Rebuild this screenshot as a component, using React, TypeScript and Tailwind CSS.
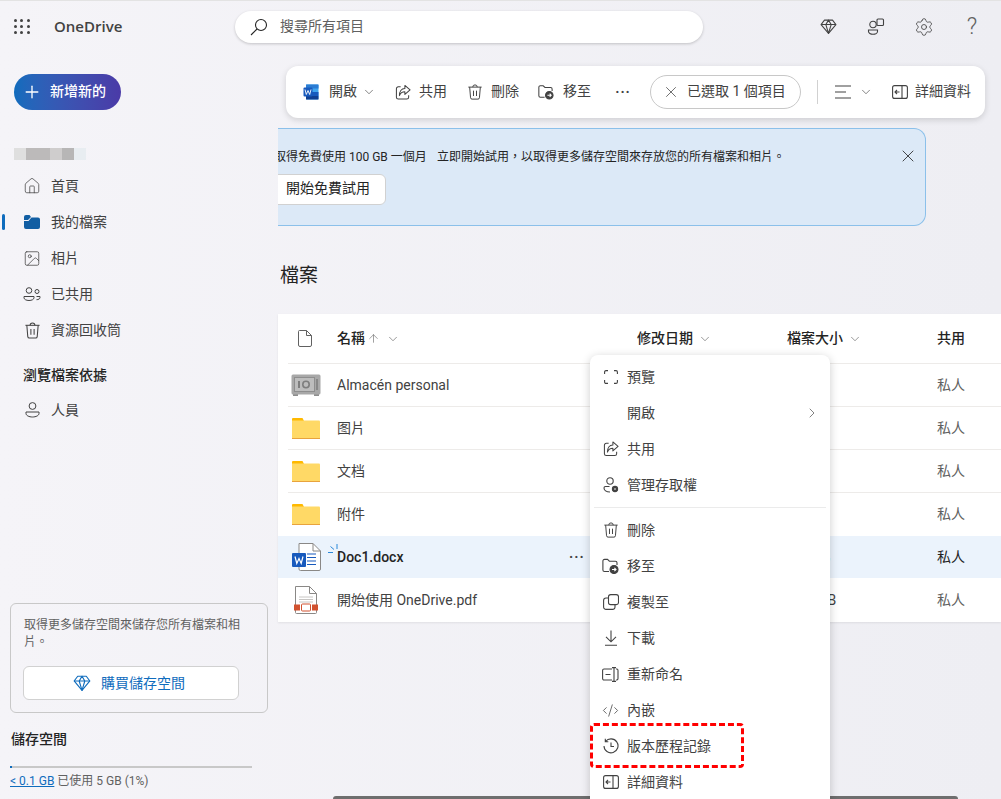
// App.tsx
import React from "react";
import {
  ArrowUp,
  ChevronDown,
  ChevronRight,
  CodeXml,
  Home,
  Image,
  Plus,
  Settings,
  X,
} from "lucide-react";

const Diamond = ({ size = 16, className = "" }: { size?: number; className?: string }) => (
  <svg width={size} height={size} viewBox="0 0 16 16" fill="none" stroke="currentColor" strokeWidth="1" className={className}>
    <path d="M4.200 2h7.600L15 6.200 8 14.500 1 6.200 4.200 2Z" strokeLinejoin="round" />
    <path d="M1 6.200h14M5.500 6.200 8 2l2.500 4.200L8 14.500 5.500 6.200Z" strokeLinejoin="round" />
  </svg>
);

const ShareIcon = ({ size = 17 }: { size?: number }) => (
  <svg width={size} height={size} viewBox="0 0 17 17" fill="none" stroke="currentColor" strokeWidth="1.1" strokeLinejoin="round">
    <path d="M6 2.500H3.500a2 2 0 0 0-2 2v9a2 2 0 0 0 2 2h9a2 2 0 0 0 2-2v-2" />
    <path d="M10.500 1 16 5.800l-5.500 4.800V7.800c-3 0-4.800 1.500-5.800 4 0-4.500 2-7.500 5.800-7.500V1Z" />
  </svg>
);

const TrashIcon = ({ size = 18 }: { size?: number }) => (
  <svg width={size} height={size} viewBox="0 0 18 18" fill="none" stroke="currentColor" strokeWidth="1.1">
    <path d="M1.500 3.500h15" />
    <path d="M6.500 3.500a2.500 2.500 0 0 1 5 0" />
    <path d="M3 3.500l1 12a1.700 1.700 0 0 0 1.700 1.500h6.600a1.700 1.700 0 0 0 1.700-1.500l1-12" />
    <path d="M7.300 7.500v6M10.700 7.500v6" />
  </svg>
);

const DetailsIcon = () => (
  <svg width="16" height="14" viewBox="0 0 16 14" fill="none" stroke="currentColor" strokeWidth="1.1">
    <rect x="0.600" y="0.600" width="14.800" height="12.800" rx="2" />
    <path d="M10 0.600v12.800M7.500 7H3M5 5 3 7l2 2" />
  </svg>
);

const MoveIcon = () => (
  <svg width="17" height="16" viewBox="0 0 17 16" fill="none" stroke="currentColor" strokeWidth="1.1">
    <path d="M7 13.500H2.500a1.600 1.600 0 0 1-1.600-1.600V3a1.600 1.600 0 0 1 1.600-1.600h3L7.400 3.200h6A1.600 1.600 0 0 1 15 4.800V7" />
    <circle cx="12" cy="11.500" r="4" fill="currentColor" />
    <path d="M10 11.500h4M12.400 9.800l1.600 1.700-1.600 1.700" stroke="#fff" />
  </svg>
);

const WordMini = () => (
  <svg width="16" height="16" viewBox="0 0 16 16">
    <rect x="3" y="0.500" width="12.500" height="15" rx="1" fill="#41a5ee" />
    <rect x="3" y="0.500" width="12.500" height="4" fill="#2b7cd3" />
    <rect x="3" y="8" width="12.500" height="4" fill="#185abd" />
    <rect x="3" y="12" width="12.500" height="3.500" fill="#103f91" />
    <rect x="0.500" y="3.500" width="9" height="9" rx="1" fill="#185abd" />
    <path d="M2 5.500 3.300 10.500 5 6.500 6.700 10.500 8 5.500" fill="none" stroke="#fff" strokeWidth="0.900" />
  </svg>
);

const Folder = () => (
  <svg width="28" height="22" viewBox="0 0 28 22">
    <path d="M0 2a1 1 0 0 1 1-1h9.500L12 4H0V2Z" fill="#ffb900" />
    <path d="M0 3.500h27a1 1 0 0 1 1 1V21a1 1 0 0 1-1 1H1a1 1 0 0 1-1-1V3.500Z" fill="#ffd966" />
    <rect x="0" y="21" width="28" height="1" fill="#e8a33d" />
  </svg>
);

const Safe = () => (
  <svg width="30" height="22" viewBox="0 0 30 22">
    <rect x="2" y="19" width="5" height="3" fill="#8e8e8e" />
    <rect x="23" y="19" width="5" height="3" fill="#8e8e8e" />
    <rect x="0.500" y="0.500" width="29" height="20" rx="1.500" fill="#a8a8a8" />
    <rect x="3.500" y="3.500" width="20" height="14" fill="#bdbdbd" stroke="#8e8e8e" />
    <rect x="7" y="7" width="2" height="7" fill="#7e7e7e" />
    <circle cx="15" cy="10.500" r="3.200" fill="none" stroke="#7e7e7e" strokeWidth="1.600" />
    <path d="M26 5v11" stroke="#7e7e7e" strokeWidth="1.500" />
  </svg>
);

const WordFile = () => (
  <svg width="29" height="28" viewBox="0 0 29 28">
    <path d="M7 .5h14l7.500 7.500v18a1.500 1.500 0 0 1-1.500 1.500H8.500A1.500 1.500 0 0 1 7 26V.5Z" fill="#fff" stroke="#8a8886" />
    <path d="M21 .5V8h7.500" fill="none" stroke="#8a8886" />
    <path d="M15 11h9M15 14.500h9M15 18h9M15 21.500h9" stroke="#185abd" strokeWidth="1.200" />
    <rect x="0" y="10" width="14" height="14" rx="1" fill="#185abd" />
    <path d="M3 13.500 4.800 20.500 7 15.500 9.200 20.500 11 13.500" fill="none" stroke="#fff" strokeWidth="1.200" />
  </svg>
);

const PdfFile = () => (
  <svg width="24" height="28" viewBox="0 0 24 28">
    <path d="M1.500 .5h14l7 7v19a1 1 0 0 1-1 1H2.500a1 1 0 0 1-1-1V.5Z" fill="#fff" stroke="#8a8886" />
    <path d="M15.500 .5v7h7" fill="none" stroke="#8a8886" />
    <path d="M5 11h14M5 13.500h14M5 16h14" stroke="#c8c6c4" />
    <rect x="0" y="18.500" width="6" height="6" fill="#d1512f" />
    <rect x="18" y="18.500" width="6" height="6" fill="#d1512f" />
    <rect x="7.500" y="18" width="9" height="7" rx="1" fill="#fff" stroke="#d1512f" />
  </svg>
);

const NavItem: React.FC<{ icon: React.ReactNode; label: string; active?: boolean }> = ({ icon, label, active }) => (
  <div className="relative flex h-9 items-center pl-[23px] text-[14px] text-[#424242]">
    {active && <div className="absolute left-[2px] top-[10px] h-4 w-[3px] rounded-sm bg-[#0f6cbd]" />}
    <span className="flex w-[18px] justify-center">{icon}</span>
    <span className="ml-[10px]">{label}</span>
  </div>
);

const ToolButton: React.FC<{ icon: React.ReactNode; label: string; className?: string }> = ({ icon, label, className = "" }) => (
  <div className={`flex items-center ${className}`}>
    <span className="flex w-[16px] justify-center">{icon}</span>
    <span className="ml-[8px] pb-[2px]">{label}</span>
  </div>
);

const Sidebar = () => (
  <aside className="flex h-[747px] w-[278px] shrink-0 flex-col">
    <button className="ml-[14px] mt-[22px] flex h-9 w-[107px] items-center rounded-full bg-gradient-to-r from-[#0f6cbd] to-[#4a3aa7] pl-[8px] text-[14px] font-medium text-white">
      <Plus size={20} strokeWidth={1.6} />
      <span className="ml-[8px] pb-[2px]">新增新的</span>
    </button>
    <div className="ml-[14px] mt-[38px] flex h-3">
      <div className="w-3 bg-[#dfdfdf]" />
      <div className="w-6 bg-[#bcbaba]" />
      <div className="w-3 bg-[#cfcdcd]" />
      <div className="w-3 bg-[#b7b6b6]" />
      <div className="w-3 bg-[#e8edf1]" />
    </div>
    <nav className="mt-[8px]">
      <NavItem icon={<Home size={20} strokeWidth={1} />} label="首頁" />
      <NavItem
        active
        icon={
          <svg width="16" height="14" viewBox="0 0 16 14" fill="#115ea3">
            <path d="M0 2a2 2 0 0 1 2-2h3.500l1.500 2-3 3H0V2Z" />
            <path d="M0 6h4.500l3-3.500H14a2 2 0 0 1 2 2V12a2 2 0 0 1-2 2H2a2 2 0 0 1-2-2V6Z" />
          </svg>
        }
        label="我的檔案"
      />
      <NavItem icon={<Image size={19} strokeWidth={1} />} label="相片" />
      <NavItem
        icon={
          <svg width="18" height="14" viewBox="0 0 18 14" fill="none" stroke="currentColor" strokeWidth="1">
            <circle cx="6" cy="3.500" r="2.800" />
            <path d="M1 9.500h10v1.300c0 1.500-2.200 2.700-5 2.700s-5-1.200-5-2.700V9.500Z" />
            <circle cx="14" cy="4.500" r="2" />
            <path d="M13.500 9.500h3.500v1c0 1.300-1.500 2.200-3.500 2.200" />
          </svg>
        }
        label="已共用"
      />
      <NavItem icon={<TrashIcon size={17} />} label="資源回收筒" />
    </nav>
    <div className="ml-[23px] mt-[11px] h-[33px] text-[14px] font-medium leading-[33px] text-[#242424]">瀏覽檔案依據</div>
    <NavItem
      icon={
        <svg width="15" height="16" viewBox="0 0 15 16" fill="none" stroke="currentColor" strokeWidth="1">
          <circle cx="7.500" cy="4" r="3.400" />
          <path d="M1 10h13v1.500c0 2-3 3.500-6.500 3.500S1 13.500 1 11.500V10Z" />
        </svg>
      }
      label="人員"
    />
    <div className="mx-[10px] mt-auto h-[110px] rounded-md border border-[#c8c8c8] px-[13px] pt-[13px]">
      <p className="text-[12px] leading-[17px] text-[#616161]">取得更多儲存空間來儲存您所有檔案和相片。</p>
      <button className="-ml-px mt-[15px] flex h-[34px] w-[216px] items-center justify-center rounded-md border border-[#d1d1d1] bg-white pr-[4px] text-[14px] text-[#0f6cbd]">
        <Diamond size={18} />
        <span className="ml-[10px]">購買儲存空間</span>
      </button>
    </div>
    <div className="ml-[11px] mt-[16px] text-[14px] font-medium leading-5 text-[#242424]">儲存空間</div>
    <div className="ml-[10px] mt-[17px] h-[2px] w-[242px] bg-[#c8c8c8]">
      <div className="h-full w-[2px] bg-[#0f6cbd]" />
    </div>
    <div className="mb-[10px] ml-[10px] mt-[6px] text-[12px] leading-[15px] text-[#616161]">
      <span className="text-[#0f6cbd] underline">&lt; 0.1 GB</span> 已使用 5 GB (1%)
    </div>
  </aside>
);

const Toolbar = () => (
  <div className="ml-[8px] mt-[14px] flex h-[52px] w-[699px] items-center rounded-xl bg-white pl-[17px] text-[14px] text-[#424242] shadow-[0_2px_6px_rgba(0,0,0,0.15)]">
    <ToolButton icon={<WordMini />} label="開啟" className="[&>span:last-child]:ml-[10px]" />
    <ChevronDown size={14} strokeWidth={1.1} className="ml-[5px]" />
    <ToolButton icon={<ShareIcon />} label="共用" className="ml-[19px]" />
    <ToolButton icon={<TrashIcon />} label="刪除" className="ml-[20px]" />
    <ToolButton icon={<MoveIcon />} label="移至" className="ml-[19px] [&>span:last-child]:ml-[9px]" />
    <span className="ml-[24px] w-4 text-center text-[14px] font-bold leading-none tracking-[1px]">···</span>
    <div className="ml-[19px] flex h-[34px] w-[151px] items-center rounded-full border border-[#c8c8c8] pl-[11px]">
      <X size={18} strokeWidth={1} />
      <span className="ml-[7px] pb-[2px]">已選取 1 個項目</span>
    </div>
    <div className="ml-[16px] h-6 w-px bg-[#d1d1d1]" />
    <svg width="17" height="14" viewBox="0 0 17 14" stroke="currentColor" strokeWidth="1.1" className="ml-[17px]">
      <path d="M0 1h16M0 7h11M0 13h16" />
    </svg>
    <ChevronDown size={14} strokeWidth={1.1} className="ml-[7px]" />
    <ToolButton icon={<DetailsIcon />} label="詳細資料" className="ml-[19px] [&>span:last-child]:ml-[7px]" />
  </div>
);

const Banner = () => (
  <div className="mt-[10px] h-[98px] w-[648px] overflow-hidden rounded-r-xl border-y border-r border-[#8bc0ea] bg-[#dce9f7]">
    <div className="flex h-[56px] items-start pt-[19px] text-[12px] leading-[18px] text-[#242424]">
      <span className="-ml-[4px] w-[163px] shrink-0 whitespace-nowrap">取得免費使用 100 GB 一個月</span>
      <span className="whitespace-nowrap">立即開始試用，以取得更多儲存空間來存放您的所有檔案和相片。</span>
      <X size={20} strokeWidth={1} className="ml-auto mr-[7px] -mt-[2px]" />
    </div>
    <button className="-ml-[20px] -mt-[11px] block h-[31px] w-[128px] rounded-md border border-[#d1d1d1] bg-white pb-[2px] pl-[27px] text-left text-[14px] text-[#242424]">
      開始免費試用
    </button>
  </div>
);

const rowCols = "grid grid-cols-[59px_300px_150px_150px_1fr] items-center";

const files = [
  { name: "Almacén personal", icon: <Safe /> },
  { name: "图片", icon: <Folder /> },
  { name: "文档", icon: <Folder /> },
  { name: "附件", icon: <Folder /> },
];

const FileTable = () => (
  <div className="mt-[22px] h-[308px] bg-white text-[14px] text-[#242424] shadow-[0_1px_2px_rgba(0,0,0,0.08)]">
    <div className={`${rowCols} h-[49px] font-medium`}>
      <div className="flex justify-center pr-[6px]">
        <svg width="14" height="17" viewBox="0 0 14 17" fill="none" stroke="#616161">
          <path d="M1.500 .5h7l5 5v9.500a1.500 1.500 0 0 1-1.500 1.500H2A1.500 1.500 0 0 1 .5 15V1.500a1 1 0 0 1 1-1Z" />
          <path d="M8.500 .5v5h5" />
        </svg>
      </div>
      <div className="flex items-center">
        名稱
        <ArrowUp size={13} strokeWidth={1.1} className="ml-[2px] text-[#616161]" />
        <ChevronDown size={14} strokeWidth={1.1} className="ml-[6px] text-[#616161]" />
      </div>
      <div className="flex items-center">
        修改日期
        <ChevronDown size={14} strokeWidth={1.1} className="ml-[5px] text-[#616161]" />
      </div>
      <div className="flex items-center">
        檔案大小
        <ChevronDown size={14} strokeWidth={1.1} className="ml-[5px] text-[#616161]" />
      </div>
      <div>共用</div>
    </div>
    <div className="ml-[10px] h-px bg-[#edebe9]" />
    {files.map((file) => (
      <React.Fragment key={file.name}>
        <div className={`${rowCols} h-[42px] text-[#424242]`}>
          <div className="flex justify-center pr-[3px]">{file.icon}</div>
          <div>{file.name}</div>
          <div />
          <div />
          <div className="text-[#616161]">私人</div>
        </div>
        {file.name !== "附件" && <div className="ml-[10px] h-px bg-[#edebe9]" />}
      </React.Fragment>
    ))}
    <div className={`${rowCols} mt-px h-[42px] bg-[#ebf3fc]`}>
      <div className="flex justify-center pr-[3px]">
        <WordFile />
      </div>
      <div className="relative flex items-center font-medium">
        <svg width="10" height="10" viewBox="0 0 10 10" stroke="#2b88d8" strokeWidth="1" className="absolute -left-[9px] -top-[3px]">
          <path d="M9 0v5M2.500 2.500l3.500 3M0 8.500h5" />
        </svg>
        Doc1.docx
        <span className="absolute left-[232px] text-[14px] font-bold leading-none tracking-[1px] text-[#424242]">···</span>
      </div>
      <div />
      <div className="tracking-[0.6px]">9.7 KB</div>
      <div>私人</div>
    </div>
    <div className={`${rowCols} h-[44px] text-[#424242]`}>
      <div className="flex justify-center pr-[3px]">
        <PdfFile />
      </div>
      <div>開始使用 OneDrive.pdf</div>
      <div />
      <div className="tracking-[-0.4px]">1.11 MB</div>
      <div className="text-[#616161]">私人</div>
    </div>
  </div>
);

const MenuItem: React.FC<{ icon?: React.ReactNode; label: string; chevron?: boolean }> = ({ icon, label, chevron }) => (
  <div className="flex h-9 items-center pl-[12px] pr-[10px] text-[14px] text-[#424242]">
    <span className="flex w-[17px] justify-center">{icon}</span>
    <span className="ml-[8px]">{label}</span>
    {chevron && <ChevronRight size={16} strokeWidth={1} className="ml-auto" />}
  </div>
);

const ContextMenu = () => (
  <div className="absolute left-[590px] top-[354px] h-[460px] w-[240px] rounded-lg bg-white pt-[4px] shadow-[0_2px_10px_rgba(0,0,0,0.2)]">
    <MenuItem
      label="預覽"
      icon={
        <svg width="14" height="14" viewBox="0 0 14 14" fill="none" stroke="currentColor" strokeWidth="1.1">
          <path d="M.6 4V2A1.400 1.400 0 0 1 2 .6h2M10 .6h2A1.400 1.400 0 0 1 13.400 2v2M13.400 10v2a1.400 1.400 0 0 1-1.400 1.400h-2M4 13.400H2A1.400 1.400 0 0 1 .6 12v-2" />
        </svg>
      }
    />
    <MenuItem label="開啟" chevron />
    <MenuItem label="共用" icon={<ShareIcon size={16} />} />
    <MenuItem
      label="管理存取權"
      icon={
        <svg width="16" height="16" viewBox="0 0 16 16" fill="none" stroke="currentColor" strokeWidth="1.1">
          <circle cx="7" cy="4" r="3.200" />
          <path d="M6.500 9.500H2.500A1.500 1.500 0 0 0 1 11c0 2 2.200 4 6 4" />
          <circle cx="12" cy="12" r="2.600" fill="currentColor" />
          <circle cx="12" cy="12" r="0.800" fill="#fff" stroke="none" />
        </svg>
      }
    />
    <div className="mx-[4px] my-[4px] h-px bg-[#ebebeb]" />
    <MenuItem label="刪除" icon={<TrashIcon size={16} />} />
    <MenuItem label="移至" icon={<MoveIcon />} />
    <MenuItem
      label="複製至"
      icon={
        <svg width="16" height="16" viewBox="0 0 16 16" fill="none" stroke="currentColor" strokeWidth="1.1">
          <rect x="5.500" y="0.600" width="10" height="10" rx="2.200" />
          <path d="M5.500 4H3A2.400 2.400 0 0 0 .6 6.400V13A2.400 2.400 0 0 0 3 15.400h6.500A2.400 2.400 0 0 0 12 13v-2.400" />
        </svg>
      }
    />
    <MenuItem
      label="下載"
      icon={
        <svg width="14" height="16" viewBox="0 0 14 16" fill="none" stroke="currentColor" strokeWidth="1.1">
          <path d="M7 .5v11M2 6.800l5 5 5-5M1 15.300h12" />
        </svg>
      }
    />
    <MenuItem
      label="重新命名"
      icon={
        <svg width="17" height="15" viewBox="0 0 17 15" fill="none" stroke="currentColor" strokeWidth="1.1">
          <path d="M10 2H2A1.400 1.400 0 0 0 .6 3.400v8.200A1.400 1.400 0 0 0 2 13h8M14 2h1a1.400 1.400 0 0 1 1 1.400v8.200A1.400 1.400 0 0 1 15 13h-1M12 .6v13.800M10 .6h4M10 14.400h4M3.500 7.500h5" />
        </svg>
      }
    />
    <MenuItem label="內嵌" icon={<CodeXml size={19} strokeWidth={1.1} />} />
    <MenuItem
      label="版本歷程記錄"
      icon={
        <svg width="16" height="16" viewBox="0 0 16 16" fill="none" stroke="currentColor" strokeWidth="1.1">
          <path d="M2.500 3.500A7 7 0 1 1 1 8M2.300 .8v3h3M8 4.500V8.500h3" />
        </svg>
      }
    />
    <MenuItem label="詳細資料" icon={<DetailsIcon />} />
  </div>
);

export default function App() {
  return (
    <div className="relative flex h-[799px] w-[1001px] flex-col overflow-hidden border-t border-[#e3e3e3] bg-gradient-to-r from-[#f5f4f8] to-[#eeeef3] font-['Roboto','Noto_Sans_CJK_TC',sans-serif]">
      <header className="flex h-[51px] shrink-0 items-center">
        <div className="ml-[14px] grid w-[16px] grid-cols-3 gap-[3px]">
          {Array.from({ length: 9 }).map((_, i) => (
            <div key={i} className="size-[3px] rounded-full bg-[#424242]" />
          ))}
        </div>
        <span className="ml-[24px] w-[68px] font-['Open_Sans',sans-serif] text-[15px] font-semibold text-[#424242]">OneDrive</span>
        <div className="ml-[113px] flex h-8 w-[468px] items-center rounded-full bg-white pl-[15px] text-[14px] text-[#616161] shadow-[0_1px_3px_rgba(0,0,0,0.2)]">
          <svg width="18" height="18" viewBox="0 0 18 18" fill="none" stroke="#242424" strokeWidth="1.1">
            <circle cx="11" cy="7" r="5.500" />
            <path d="M7 11 1 17" />
          </svg>
          <span className="ml-[12px]">搜尋所有項目</span>
        </div>
        <div className="ml-[101px] flex items-center text-[#424242] [&>*]:flex [&>*]:w-12 [&>*]:justify-center">
          <span>
            <Diamond size={17} />
          </span>
          <span>
            <svg width="18" height="18" viewBox="0 0 18 18" fill="none" stroke="currentColor" strokeWidth="1.1">
              <rect x="10" y="1" width="6.500" height="6.500" rx="1" />
              <circle cx="6" cy="6.500" r="3.200" />
              <path d="M1.500 12h9v1.500c0 1.500-2 2.800-4.500 2.800S1.500 15 1.500 13.500V12Z" />
            </svg>
          </span>
          <span>
            <Settings size={20} strokeWidth={1} />
          </span>
          <span className="text-[23px] font-light leading-none text-[#616161]">?</span>
        </div>
      </header>
      <div className="flex">
        <Sidebar />
        <main className="min-w-0 flex-1">
          <Toolbar />
          <Banner />
          <h1 className="ml-[2px] mt-[34px] h-[32px] text-[19px] font-normal leading-[32px] text-[#242424]">檔案</h1>
          <FileTable />
        </main>
      </div>
      <div className="absolute bottom-0 left-[333px] h-[3px] w-[625px] rounded-t-sm bg-[#6e6e6e]" />
      <ContextMenu />
      <div className="absolute left-[590px] top-[722px] h-[45px] w-[154px] rounded-sm border-[3px] border-dashed border-[#ff0000]" />
    </div>
  );
}
